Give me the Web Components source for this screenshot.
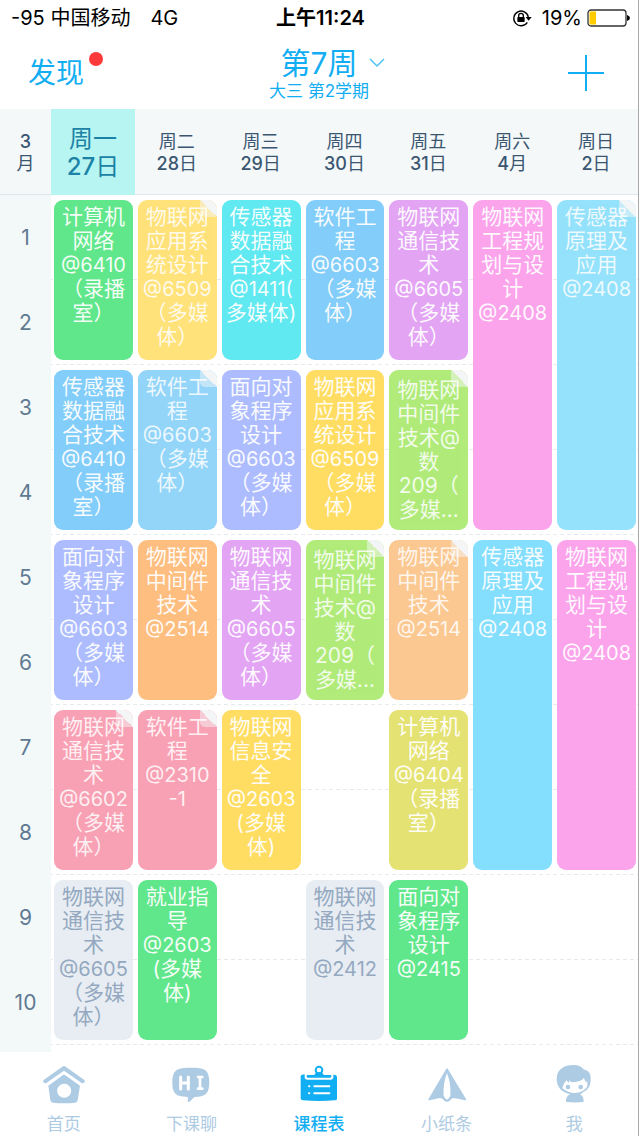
<!DOCTYPE html>
<html lang="zh-CN">
<head>
<meta charset="utf-8">
<meta name="viewport" content="width=device-width, initial-scale=1">
<title>课程表</title>
<style>
  body {
    margin: 0;
    background: #fff;
    font-family: Inter, "Noto Sans CJK SC", sans-serif;
  }
</style>
</head>
<body>
<timetable-app></timetable-app>

<script>
const define = (name, markup, setup) => {
  const template = document.createElement('template');
  template.innerHTML = markup;
  customElements.define(name, class extends HTMLElement {
    constructor() {
      super();
      this.attachShadow({ mode: 'open' }).append(template.content.cloneNode(true));
    }
    connectedCallback() {
      if (setup) setup(this, this.shadowRoot);
    }
  });
};

define('status-bar', `
  <style>
    :host { display: grid; grid-template-columns: 1fr auto 1fr; align-items: center;
      height: 36px; padding: 0 8px 0 11px; font-size: 20px; line-height: 24px; color: #000; }
    .left { display: flex; gap: 20px; }
    .time { font-weight: 600; }
    .right { display: flex; justify-content: flex-end; align-items: center; gap: 5px; }
    .lock { margin-right: 5px; }
    svg { display: block; }
  </style>
  <div class="left"><span>-95 中国移动</span><span>4G</span></div>
  <div class="time">上午11:24</div>
  <div class="right">
    <svg class="lock" width="20" height="18" viewBox="0 0 60 54" role="img" aria-label="方向锁定">
      <path d="M46 40A22 22 0 1 1 49 24" fill="none" stroke="#000" stroke-width="4"/>
      <path d="M41 24h18l-9 11z"/>
      <rect x="16" y="24" width="22" height="15" rx="2"/>
      <path d="M20 25v-5a7 7 0 0 1 14 0v5" fill="none" stroke="#000" stroke-width="4"/>
    </svg>
    <span>19%</span>
    <svg width="43" height="18" viewBox="0 0 43 18" role="img" aria-label="电量">
      <rect x="1" y="1" width="38" height="16" rx="3" fill="#fff" stroke="#333" stroke-width="1.3"/>
      <rect x="2.500" y="2.500" width="6.500" height="13" fill="#fc0"/>
      <path d="M40 6q3 1 3 3t-3 3z"/>
    </svg>
  </div>`);

define('nav-bar', `
  <style>
    :host { display: grid; grid-template-columns: 1fr auto 1fr; align-items: center;
      height: 73px; padding: 0 34px 0 28px; box-sizing: border-box; color: #12aef3; }
    button { font: inherit; color: inherit; background: none; border: 0; padding: 0; }
    .discover { justify-self: start; position: relative; font-size: 28px; line-height: 34px; }
    .discover i { position: absolute; left: 61px; top: -4px; width: 14px; height: 14px;
      border-radius: 50%; background: #fd3a3a; }
    .week { display: flex; flex-direction: column; align-items: center; margin-left: 6px;
      padding-top: 2px; }
    .title { display: flex; align-items: center; gap: 12px; padding-left: 28px;
      font-size: 30px; line-height: 34px; }
    .term { font-size: 17px; line-height: 22px; }
    .add { justify-self: end; }
    svg { display: block; fill: none; stroke: currentColor; }
  </style>
  <button class="discover">发现<i></i></button>
  <button class="week">
    <span class="title">第7周
      <svg width="16" height="10" viewBox="0 0 16 10" stroke-width="1.500" opacity=".75"><path d="M1 1l7 7 7-7"/></svg>
    </span>
    <span class="term">大三 第2学期</span>
  </button>
  <button class="add" aria-label="添加">
    <svg width="36" height="36" viewBox="0 0 36 36" stroke-width="2"><path d="M18 0v36M0 18h36"/></svg>
  </button>`);

define('course-card', `
  <style>
    :host { display: block; position: relative; box-sizing: border-box; overflow: hidden;
      height: calc(var(--span) * var(--row) - 10px); padding-top: 5px; border-radius: 9px;
      background: var(--fill); color: rgba(255,255,255,.94); text-align: center; white-space: nowrap;
      font-size: 21px; line-height: 24px; }
    :host([clipped]) { padding-top: 8px; }
    :host([muted]) { color: #94a9c0; }
    .text { position: relative; }
    :host([folded]) .text { opacity: .9; }
    .fold { display: none; }
    :host([folded]) .fold { display: block; position: absolute; top: 0; right: 0;
      width: 17px; height: 17px; border-radius: 0 0 0 5px;
      background: linear-gradient(45deg, rgba(244,245,246,.5) 50%, #f4f5f6 50%); }
  </style>
  <div class="fold"></div>
  <div class="text"><slot></slot></div>`);

const G = '#61e78b', Y = '#ffdd62', B = '#82cdf9', P = '#e3a4f4', K = '#fba4ec',
      V = '#adbcfe', L = '#b1ec7b', R = '#f9a1b4', N = '#e8edf4';
// [row, column, fill, lines, flags, periods]
const courses = [
  [0,0,G,'计算机|网络|@6410|（录播|室）'],
  [0,1,'#ffe27a','物联网|应用系|统设计|@6509|（多媒|体）','folded'],
  [0,2,'#60e9f0','传感器|数据融|合技术|@1411(|多媒体)'],
  [0,3,B,'软件工|程|@6603|（多媒|体）'],
  [0,4,P,'物联网|通信技|术|@6605|（多媒|体）'],
  [0,5,K,'物联网|工程规|划与设|计|@2408','',4],
  [0,6,'#94e2fb','传感器|原理及|应用|@2408','folded',4],
  [2,0,B,'传感器|数据融|合技术|@6410|（录播|室）'],
  [2,1,'#93d5f9','软件工|程|@6603|（多媒|体）','folded'],
  [2,2,V,'面向对|象程序|设计|@6603|（多媒|体）'],
  [2,3,Y,'物联网|应用系|统设计|@6509|（多媒|体）'],
  [2,4,L,'物联网|中间件|技术@|数|209（|多媒...','folded clipped'],
  [4,0,V,'面向对|象程序|设计|@6603|（多媒|体）'],
  [4,1,'#fdbe80','物联网|中间件|技术|@2514'],
  [4,2,P,'物联网|通信技|术|@6605|（多媒|体）'],
  [4,3,L,'物联网|中间件|技术@|数|209（|多媒...','folded clipped'],
  [4,4,'#fbc892','物联网|中间件|技术|@2514','folded'],
  [4,5,'#84defd','传感器|原理及|应用|@2408','',4],
  [4,6,K,'物联网|工程规|划与设|计|@2408','',4],
  [6,0,R,'物联网|通信技|术|@6602|（多媒|体）','folded'],
  [6,1,R,'软件工|程|@2310|-1','folded'],
  [6,2,Y,'物联网|信息安|全|@2603|(多媒|体)'],
  [6,3],
  [6,4,'#e5e274','计算机|网络|@6404|（录播|室）'],
  [8,0,N,'物联网|通信技|术|@6605|（多媒|体）','muted'],
  [8,1,G,'就业指|导|@2603|(多媒|体)'],
  [8,2],
  [8,3,N,'物联网|通信技|术|@2412','muted'],
  [8,4,G,'面向对|象程序|设计|@2415'],
  [8,5],
  [8,6]
];

define('week-table', `
  <style>
    :host { display: block; --row: 85px; }
    table { width: 100%; table-layout: fixed; border-collapse: separate; border-spacing: 0; }
    .gutter { width: 51px; }
    th, td { padding: 0; }
    thead th { height: 86px; box-sizing: border-box; padding-top: 2px;
      background: #f4f8f9; border-bottom: 1px solid #dfe7ec;
      color: #3a5671; font-size: 18px; line-height: 22px; font-weight: 400; }
    thead b { font-weight: 500; }
    thead th.today { background: #b6f5f1; border-color: #b6f5f1; color: #1c83a6;
      font-size: 24px; line-height: 28px; }
    tbody { background: linear-gradient(#fff 84px, transparent 84px) 0 0 / 100% 85px,
      repeating-linear-gradient(90deg, #e6ebee 0 4px, transparent 4px 7px); }
    tbody th { height: var(--row); background: #f3f8f8;
      color: #5f7a92; font-size: 21px; line-height: 24px; font-weight: 400; }
    tbody td { padding: 0 2px 0 3px; vertical-align: middle; }
    tfoot th { height: 7px; background: #f3f8f8; }
    .room { font-size: 20px; }
  </style>
  <table>
    <colgroup><col class="gutter"><col span="7"></colgroup>
    <thead><tr>
      <th scope="col"><b>3</b><br>月</th>
      <th scope="col" class="today">周一<br><b>27</b>日</th>
      <th scope="col">周二<br><b>28</b>日</th>
      <th scope="col">周三<br><b>29</b>日</th>
      <th scope="col">周四<br><b>30</b>日</th>
      <th scope="col">周五<br><b>31</b>日</th>
      <th scope="col">周六<br><b>4</b>月</th>
      <th scope="col">周日<br><b>2</b>日</th>
    </tr></thead>
    <tbody></tbody>
    <tfoot><tr><th></th><td colspan="7"></td></tr></tfoot>
  </table>`, (host, root) => {
  const body = root.querySelector('tbody');
  for (let r = 0; r < 10; r++) {
    const tr = body.insertRow();
    const th = document.createElement('th');
    th.scope = 'row';
    th.textContent = r + 1;
    tr.append(th);
    for (const [row, , fill, lines, flags = '', span = 2] of courses) {
      if (row !== r) continue;
      const td = tr.insertCell();
      td.rowSpan = span;
      if (!fill) continue;
      const card = document.createElement('course-card');
      card.style.setProperty('--fill', fill);
      card.style.setProperty('--span', span);
      flags.split(' ').filter(Boolean).forEach(f => card.setAttribute(f, ''));
      for (const line of lines.split('|')) {
        const div = document.createElement('div');
        div.textContent = line;
        if (/^[@-]/.test(line)) div.className = 'room';
        card.append(div);
      }
      td.append(card);
    }
  }
});

define('tab-item', `
  <style>
    :host { display: block; flex: 1 1 0; color: #aecbe4; }
    :host([active]) { color: #12aef3; font-weight: 500; }
    a { display: flex; flex-direction: column; align-items: center; gap: 9px;
      color: inherit; text-decoration: none; font-size: 17px; line-height: 22px; }
    ::slotted(svg) { display: block; width: 44px; height: 40px; fill: currentColor; }
  </style>
  <a href="#"><slot name="icon"></slot><slot name="label"></slot></a>`);

define('tab-bar', `
  <style>
    :host { display: flex; height: 84px; padding-top: 12px; box-sizing: border-box; background: #fff; }
  </style>
  <tab-item>
    <svg slot="icon" viewBox="0 0 132 120">
      <path d="M61 8q5-4 10 0l55 39q5 4 1 8-4 5-9 1L66 20 14 56q-5 4-9-1-4-4 1-8z"/>
      <path fill-rule="evenodd" d="M62 34q4-3 8 0l44 31-7 44q-1 6-7 7-34 3-68 0-6-1-7-7l-6-44zM66 59a21 21 0 1 0 1 0z"/>
    </svg><span slot="label">首页</span></tab-item>
  <tab-item>
    <svg slot="icon" viewBox="0 0 132 120">
      <path d="M66 11c41 0 54 4 55 44 0 36-13 43-44 44-8 5-13 15-20 16-2-3 1-8-1-16-35-1-46-9-46-44 1-40 15-44 56-44z"/>
      <path fill="none" stroke="#fff" stroke-width="9" stroke-linecap="round" d="M35 39v36M58 39v36M35 57h23"/>
      <path fill="none" stroke="#fff" stroke-width="8" stroke-linecap="round" d="M87 39h13M93 39v34M87 74h13"/>
    </svg><span slot="label">下课聊</span></tab-item>
  <tab-item active>
    <svg slot="icon" viewBox="0 0 132 120">
      <path d="M11 37q0-5 5-5l7-1v8q0 8 8 8h70q8 0 8-8v-7l6 1q5 1 5 6v66q-1 4-6 4-48 4-96 0-6-1-7-5z"/>
      <path d="M31 33h16q8 0 8-7h22q0 7 8 7h16q2 0 2 4t-3 4H31q-2 0-2-4t2-4z"/>
      <circle cx="66" cy="18" r="10" fill="none" stroke="currentColor" stroke-width="6"/>
      <g fill="none" stroke="#fff" stroke-width="6" stroke-linecap="round"><path d="M36 67h1M52 67h45M36 88h1M52 88h45"/></g>
    </svg><span slot="label">课程表</span></tab-item>
  <tab-item>
    <svg slot="icon" viewBox="0 0 132 120">
      <path d="M64 14q2-3 4 0l55 91q2 4-3 4-19-5-33-7-8 1-13 8-8 6-16 0-5-7-13-8-14 2-31 7-6 0-3-5z"/>
      <path fill="#fff" d="M66 27q13 35 10 68-4 10-10 12-6-2-10-12-3-33 10-68z"/>
    </svg><span slot="label">小纸条</span></tab-item>
  <tab-item>
    <svg slot="icon" viewBox="0 0 132 120">
      <path d="M14 45C14 17 35 3 64 3c16 0 26 5 32 14 9 0 16 6 19 16 4 28-4 43-20 50-6 5-8 6-12 8 10 3 12 13 12 23-18 2-36 2-53 0 0-10 3-20 13-23C27 84 14 68 14 45z"/>
      <path fill="#fff" d="M31 72q2-11 12-23l8 8 1-8 6 6q26 0 38-13 2 8 7 14l2-7q5 20-6 27C82 91 52 92 31 72z"/>
      <circle cx="48" cy="69" r="7"/><circle cx="86" cy="69" r="7"/>
    </svg><span slot="label">我</span></tab-item>`);

define('timetable-app', `
  <style>
    :host { display: block; min-height: 100vh; box-sizing: border-box; background: #fff;
      border-right: 1px solid #a9a9a9; }
  </style>
  <status-bar></status-bar>
  <nav-bar></nav-bar>
  <week-table></week-table>
  <tab-bar></tab-bar>`);
</script>
</body>
</html>
